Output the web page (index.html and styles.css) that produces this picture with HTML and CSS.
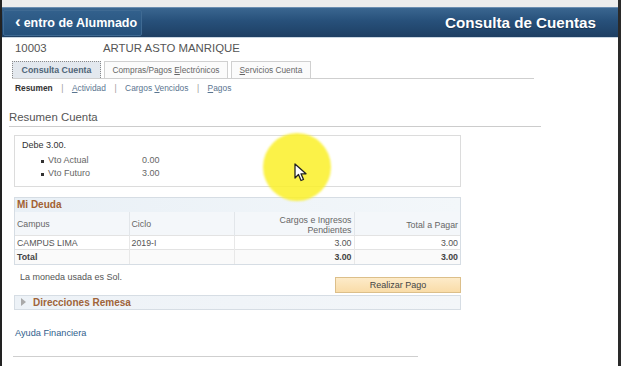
FILE: index.html
```html
<!DOCTYPE html>
<html lang="es">
<head>
    <meta charset="UTF-8">
    <title>Consulta de Cuentas</title>
    <link rel="stylesheet" href="styles.css">
</head>
<body>
    <div class="topstrip"></div>
    <header class="header">
        <a class="back-btn" href="#"><span class="chev">&#8249;</span> entro de Alumnado</a>
        <h1>Consulta de Cuentas</h1>
    </header>

    <div class="student">
        <span class="student-id">10003</span>
        <span class="student-name">ARTUR ASTO MANRIQUE</span>
    </div>

    <div class="tabs">
        <div class="tab active">Consulta Cuenta</div>
        <div class="tab">Compras/Pagos <u>E</u>lectrónicos</div>
        <div class="tab"><u>S</u>ervicios Cuenta</div>
    </div>

    <div class="sublinks">
        <b>Resumen</b><span class="sep">|</span><a href="#"><u>A</u>ctividad</a><span class="sep">|</span><a href="#">Cargos <u>V</u>encidos</a><span class="sep">|</span><a href="#"><u>P</u>agos</a>
    </div>

    <h2 class="section-title">Resumen Cuenta</h2>

    <div class="content">
        <div class="owe-box">
            <div class="owe-title">Debe 3.00.</div>
            <ul class="owe-list">
                <li><span class="lbl">Vto Actual</span><span>0.00</span></li>
                <li><span class="lbl">Vto Futuro</span><span>3.00</span></li>
            </ul>
        </div>

        <div class="debt">
            <div class="debt-title">Mi Deuda</div>
            <table class="debt-table">
                <thead>
                    <tr>
                        <th class="c1">Campus</th>
                        <th class="c2">Ciclo</th>
                        <th class="num c3">Cargos e Ingresos<br>Pendientes</th>
                        <th class="num">Total a Pagar</th>
                    </tr>
                </thead>
                <tbody>
                    <tr>
                        <td>CAMPUS LIMA</td>
                        <td>2019-I</td>
                        <td class="num">3.00</td>
                        <td class="num">3.00</td>
                    </tr>
                    <tr class="total">
                        <td>Total</td>
                        <td></td>
                        <td class="num">3.00</td>
                        <td class="num">3.00</td>
                    </tr>
                </tbody>
            </table>
        </div>

        <div class="pay-row">
            <span class="currency">La moneda usada es Sol.</span>
            <button class="pay-btn">Realizar Pago</button>
        </div>

        <div class="remesa">
            <span class="tri"></span>Direcciones Remesa
        </div>
    </div>

    <a class="help-link" href="#">Ayuda Financiera</a>
    <div class="bottom-line"></div>

    <!-- pointer highlight -->
    <div class="spot"></div>
    <svg class="cursor" width="14" height="20" viewBox="0 0 14 20">
        <path d="M1 1 L1 15 L4.5 11.5 L7 17.5 L9.5 16.5 L7 10.8 L12 10.8 Z" fill="#fff" stroke="#222" stroke-width="1.3" stroke-linejoin="round"/>
    </svg>
</body>
</html>
```

FILE: styles.css
```css
* {
    margin: 0;
    padding: 0;
    box-sizing: border-box;
}

body {
    font-family: "Liberation Sans", Arial, sans-serif;
    background: #fff;
    color: #555;
    width: 621px;
    height: 366px;
    overflow: hidden;
    position: relative;
    border-left: 2px solid #222;
    border-right: 3px solid #2a2a2a;
}

.topstrip {
    height: 7px;
    background: #ececec;
}

.header {
    height: 31px;
    background: linear-gradient(#3a6690 0%, #27507a 45%, #1e3f63 100%);
    border-top: 1px solid #6b8db0;
    border-bottom: 1px solid #c9d6e2;
    display: flex;
    align-items: center;
    justify-content: space-between;
    padding: 0 22px 0 1px;
}

.back-btn {
    display: flex;
    align-items: center;
    height: 26px;
    width: 139px;
    padding-left: 11px;
    color: #fff;
    text-decoration: none;
    font-weight: bold;
    font-size: 12.5px;
    background: linear-gradient(#32608c, #25517c);
    border: 1px solid #3f6a93;
    border-radius: 2px;
}

.chev {
    font-size: 17px;
    margin-right: 3px;
    line-height: 1;
    position: relative;
    top: -1px;
}

.header h1 {
    color: #fff;
    font-size: 15.2px;
    font-weight: bold;
    text-shadow: 0 1px 1px rgba(0, 0, 0, 0.3);
}

.student {
    display: flex;
    height: 19px;
    align-items: center;
    padding-left: 13px;
    font-size: 11.4px;
    color: #555;
}

.student-id {
    width: 88px;
}

.tabs {
    display: flex;
    margin: 4px 0 0 10px;
    width: 522px;
    border-bottom: 1px solid #cfcfcf;
    height: 18px;
    gap: 3px;
}

.tab {
    font-size: 8.3px;
    color: #666;
    border: 1px solid #d0d0d0;
    border-bottom: none;
    padding: 0 7.5px;
    line-height: 16px;
    background: #fbfbfb;
    white-space: nowrap;
    text-align: center;
}

.tab.active {
    background: #e3e8ee;
    color: #4f6578;
    font-weight: bold;
    font-size: 8.8px;
    border: 1px dotted #8a8a8a;
    border-bottom: none;
    width: 89px;
    padding: 0;
}

.sublinks {
    font-size: 8.4px;
    padding: 4px 0 0 13px;
    height: 19px;
    color: #999;
    white-space: nowrap;
}

.sublinks b {
    color: #333;
}

.sublinks a {
    color: #5a7590;
    text-decoration: none;
}

.sep {
    margin: 0 8.5px;
}

.section-title {
    font-weight: normal;
    font-size: 11.4px;
    color: #555;
    margin: 13px 0 0 7px;
    width: 532px;
    padding-bottom: 3px;
    border-bottom: 1px solid #ccc;
}

.content {
    margin-left: 12px;
    width: 447px;
}

.owe-box {
    margin-top: 8px;
    border: 1px solid #dcdcdc;
    height: 52px;
    padding: 4px 7px;
    font-size: 9px;
}

.owe-title {
    color: #333;
    margin-bottom: 4px;
}

.owe-list {
    list-style: none;
    padding-left: 19px;
}

.owe-list li {
    display: flex;
    line-height: 13px;
    color: #666;
}

.owe-list li::before {
    content: "";
    width: 3px;
    height: 3px;
    background: #333;
    margin: 6px 4px 0 0;
}

.owe-list .lbl {
    width: 94px;
}

.debt {
    margin-top: 10px;
    border: 1px solid #d6dde4;
}

.debt-title {
    font-size: 10px;
    font-weight: bold;
    color: #a26132;
    background: linear-gradient(90deg, #e9f0f6, #f3f7fa);
    height: 14px;
    padding: 1px 2px 0;
}

.debt-table {
    width: 100%;
    border-collapse: collapse;
    font-size: 8.8px;
    color: #555;
}

.debt-table th {
    font-weight: normal;
    text-align: left;
    background: #f4f7fa;
    height: 20px;
    padding: 0 2px;
    border-left: 1px solid #e2e6ea;
    color: #666;
}

.debt-table th:first-child,
.debt-table td:first-child {
    border-left: none;
}

.debt-table .c1 { width: 114px; }
.debt-table .c2 { width: 105px; }
.debt-table .c3 { width: 120px; }

.debt-table th.num {
    text-align: right;
    line-height: 10px;
    padding-top: 3px;
}

.debt-table td {
    height: 14px;
    padding: 0 2px;
    border-top: 1px solid #e3e3e3;
    border-left: 1px solid #e8e8e8;
}

.debt-table .num {
    text-align: right;
}

.total td {
    font-weight: bold;
    color: #444;
    background: #fafafa;
}

.pay-row {
    display: flex;
    justify-content: space-between;
    height: 30px;
    font-size: 9px;
    padding-left: 6px;
}

.currency {
    margin-top: 7px;
}

.pay-btn {
    align-self: flex-end;
    margin-bottom: 2px;
    width: 126px;
    height: 16px;
    font-family: inherit;
    font-size: 9px;
    color: #444;
    background: linear-gradient(#fdebc9, #f9dca8);
    border: 1px solid #dcbf8a;
}

.remesa {
    height: 15px;
    background: linear-gradient(90deg, #edf2f7, #f3f6f9);
    border: 1px solid #d6dde4;
    font-size: 10px;
    font-weight: bold;
    color: #a0643a;
    display: flex;
    align-items: center;
    padding-left: 6px;
}

.tri {
    width: 0;
    height: 0;
    border-left: 5px solid #a9a9a9;
    border-top: 4px solid transparent;
    border-bottom: 4px solid transparent;
    margin-right: 7px;
}

.help-link {
    display: block;
    margin: 18px 0 0 13px;
    font-size: 9.2px;
    color: #2f5e8c;
    text-decoration: none;
}

.bottom-line {
    margin: 18px 0 0 11px;
    width: 405px;
    border-top: 1px solid #cfcfcf;
}

.spot {
    position: absolute;
    left: 261px;
    top: 133px;
    width: 68px;
    height: 68px;
    border-radius: 50%;
    background: rgba(250, 240, 40, 0.85);
    filter: blur(1px);
}

.cursor {
    position: absolute;
    left: 292px;
    top: 163px;
}
```
